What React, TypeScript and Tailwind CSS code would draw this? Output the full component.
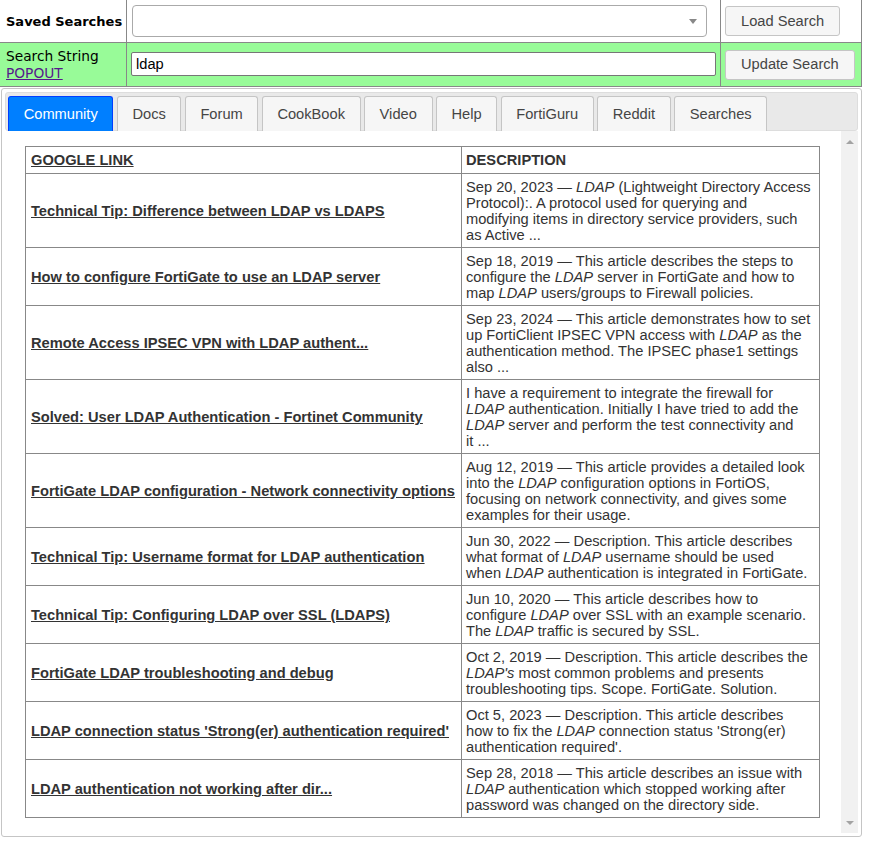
const tabs = ['Community', 'Docs', 'Forum', 'CookBook', 'Video', 'Help', 'FortiGuru', 'Reddit', 'Searches'];

// description lines are kept as they wrap in the original page
const rows = [
  {
    title: 'Technical Tip: Difference between LDAP vs LDAPS',
    desc: [
      'Sep 20, 2023 — *LDAP* (Lightweight Directory Access',
      'Protocol):. A protocol used for querying and',
      'modifying items in directory service providers, such',
      'as Active ...',
    ],
  },
  {
    title: 'How to configure FortiGate to use an LDAP server',
    desc: [
      'Sep 18, 2019 — This article describes the steps to',
      'configure the *LDAP* server in FortiGate and how to',
      'map *LDAP* users/groups to Firewall policies.',
    ],
  },
  {
    title: 'Remote Access IPSEC VPN with LDAP authent...',
    desc: [
      'Sep 23, 2024 — This article demonstrates how to set',
      'up FortiClient IPSEC VPN access with *LDAP* as the',
      'authentication method. The IPSEC phase1 settings',
      'also ...',
    ],
  },
  {
    title: 'Solved: User LDAP Authentication - Fortinet Community',
    desc: [
      'I have a requirement to integrate the firewall for',
      '*LDAP* authentication. Initially I have tried to add the',
      '*LDAP* server and perform the test connectivity and',
      'it ...',
    ],
  },
  {
    title: 'FortiGate LDAP configuration - Network connectivity options',
    desc: [
      'Aug 12, 2019 — This article provides a detailed look',
      'into the *LDAP* configuration options in FortiOS,',
      'focusing on network connectivity, and gives some',
      'examples for their usage.',
    ],
  },
  {
    title: 'Technical Tip: Username format for LDAP authentication',
    desc: [
      'Jun 30, 2022 — Description. This article describes',
      'what format of *LDAP* username should be used',
      'when *LDAP* authentication is integrated in FortiGate.',
    ],
  },
  {
    title: 'Technical Tip: Configuring LDAP over SSL (LDAPS)',
    desc: [
      'Jun 10, 2020 — This article describes how to',
      'configure *LDAP* over SSL with an example scenario.',
      'The *LDAP* traffic is secured by SSL.',
    ],
  },
  {
    title: 'FortiGate LDAP troubleshooting and debug',
    desc: [
      'Oct 2, 2019 — Description. This article describes the',
      "*LDAP's* most common problems and presents",
      'troubleshooting tips. Scope. FortiGate. Solution.',
    ],
  },
  {
    title: "LDAP connection status 'Strong(er) authentication required'",
    desc: [
      'Oct 5, 2023 — Description. This article describes',
      "how to fix the *LDAP* connection status 'Strong(er)",
      "authentication required'.",
    ],
  },
  {
    title: 'LDAP authentication not working after dir...',
    desc: [
      'Sep 28, 2018 — This article describes an issue with',
      '*LDAP* authentication which stopped working after',
      'password was changed on the directory side.',
    ],
  },
];

function Line({ text }: { text: string }) {
  return (
    <span className="block whitespace-nowrap">
      {text.split('*').map((part, i) =>
        i % 2 ? <i key={i}>{part}</i> : <span key={i}>{part}</span>
      )}
    </span>
  );
}

export default function App() {
  return (
    <div className="w-[862px] bg-white font-['Liberation_Sans',Arial,sans-serif] text-[14.67px] text-[#333]">
      {/* saved searches / search string */}
      <div className="flex h-[43px] border-b border-[#888]">
        <div className="flex w-[127px] items-center border-r border-[#888] pl-[6px] pt-px font-['DejaVu_Sans',sans-serif] text-[13px] font-bold text-black">
          Saved Searches
        </div>
        <div className="flex w-[594px] items-center border-r border-[#888] pl-[5px]">
          <div className="flex h-[32px] w-[575px] items-center justify-end rounded-[4px] border border-[#aaa] bg-white pr-[9px]">
            <span className="h-0 w-0 border-x-[4px] border-t-[5px] border-x-transparent border-t-[#888]" />
          </div>
        </div>
        <div className="flex w-[141px] items-center border-r border-[#888] pl-[4px]">
          <button className="h-[30px] rounded-[3px] border border-[#c5c5c5] bg-[#f6f6f6] px-[15px] leading-none text-[#454545]">
            Load Search
          </button>
        </div>
      </div>
      <div className="flex h-[44px] border-b border-[#888] bg-[#98fb98]">
        <div className="flex w-[127px] flex-col justify-center border-r border-[#888] pl-[6px] font-['DejaVu_Sans',sans-serif] text-[13.75px] leading-[17px] text-black">
          <span>Search String</span>
          <a className="text-[#551a8b] underline">POPOUT</a>
        </div>
        <div className="flex w-[594px] items-center border-r border-[#888] pl-[4px]">
          <div className="-mt-px flex h-[24px] w-[585px] items-center rounded-[2px] border border-[#767676] bg-white pl-[4px] text-black">
            ldap
          </div>
        </div>
        <div className="flex w-[141px] items-center border-r border-[#888] pl-[4px]">
          <button className="h-[30px] rounded-[3px] border border-[#c5c5c5] bg-[#f6f6f6] px-[15px] leading-none text-[#454545]">
            Update Search
          </button>
        </div>
      </div>

      {/* tabs */}
      <div className="ml-[1px] mt-[1px] w-[861px] rounded-[3px] border border-[#c5c5c5] p-[3px]">
        <div className="flex gap-[3.3px] rounded-[3px] border border-[#ddd] bg-[#e9e9e9] pl-[2px] pt-[3px]">
          {tabs.map((t, i) => (
            <div
              key={t}
              className={
                i === 0
                  ? 'relative -mb-px flex h-[35px] items-center rounded-t-[3px] border border-b-0 border-[#003eff] bg-[#007fff] px-[14.67px] text-white'
                  : 'relative -mb-px flex h-[35px] items-center rounded-t-[3px] border border-b-0 border-[#c5c5c5] bg-[#f6f6f6] px-[14.67px] text-[#454545]'
              }
            >
              {t}
            </div>
          ))}
        </div>

        {/* panel */}
        <div className="flex">
          <div className="flex-1 pb-[15px] pl-[20px] pr-[21px] pt-[15px]">
            <table className="w-full table-fixed border-collapse border border-[#888] leading-[16px]">
              <colgroup>
                <col className="w-[436px]" />
                <col />
              </colgroup>
              <thead>
                <tr>
                  <th className="border border-[#888] pb-[5px] pl-[5px] pr-[4px] pt-[5px] text-left font-bold underline">
                    GOOGLE LINK
                  </th>
                  <th className="border border-[#888] px-[4px] pb-[5px] pt-[5px] text-left font-bold">
                    DESCRIPTION
                  </th>
                </tr>
              </thead>
              <tbody>
                {rows.map((r) => (
                  <tr key={r.title}>
                    <td className="border border-[#888] pb-[4px] pl-[5px] pr-[4px] pt-[5px] align-middle font-bold underline">
                      <a>{r.title}</a>
                    </td>
                    <td className="border border-[#888] px-[4px] pb-[4px] pt-[5px] align-middle">
                      {r.desc.map((l) => (
                        <Line key={l} text={l} />
                      ))}
                    </td>
                  </tr>
                ))}
              </tbody>
            </table>
          </div>
          <div className="flex w-[17px] flex-col items-center justify-between bg-[#f1f1f1] pb-[8px] pt-[9px]">
            <span className="h-0 w-0 border-x-[4px] border-b-[4px] border-x-transparent border-b-[#a3a3a3]" />
            <span className="h-0 w-0 border-x-[4px] border-t-[4px] border-x-transparent border-t-[#a3a3a3]" />
          </div>
        </div>
      </div>
    </div>
  );
}
